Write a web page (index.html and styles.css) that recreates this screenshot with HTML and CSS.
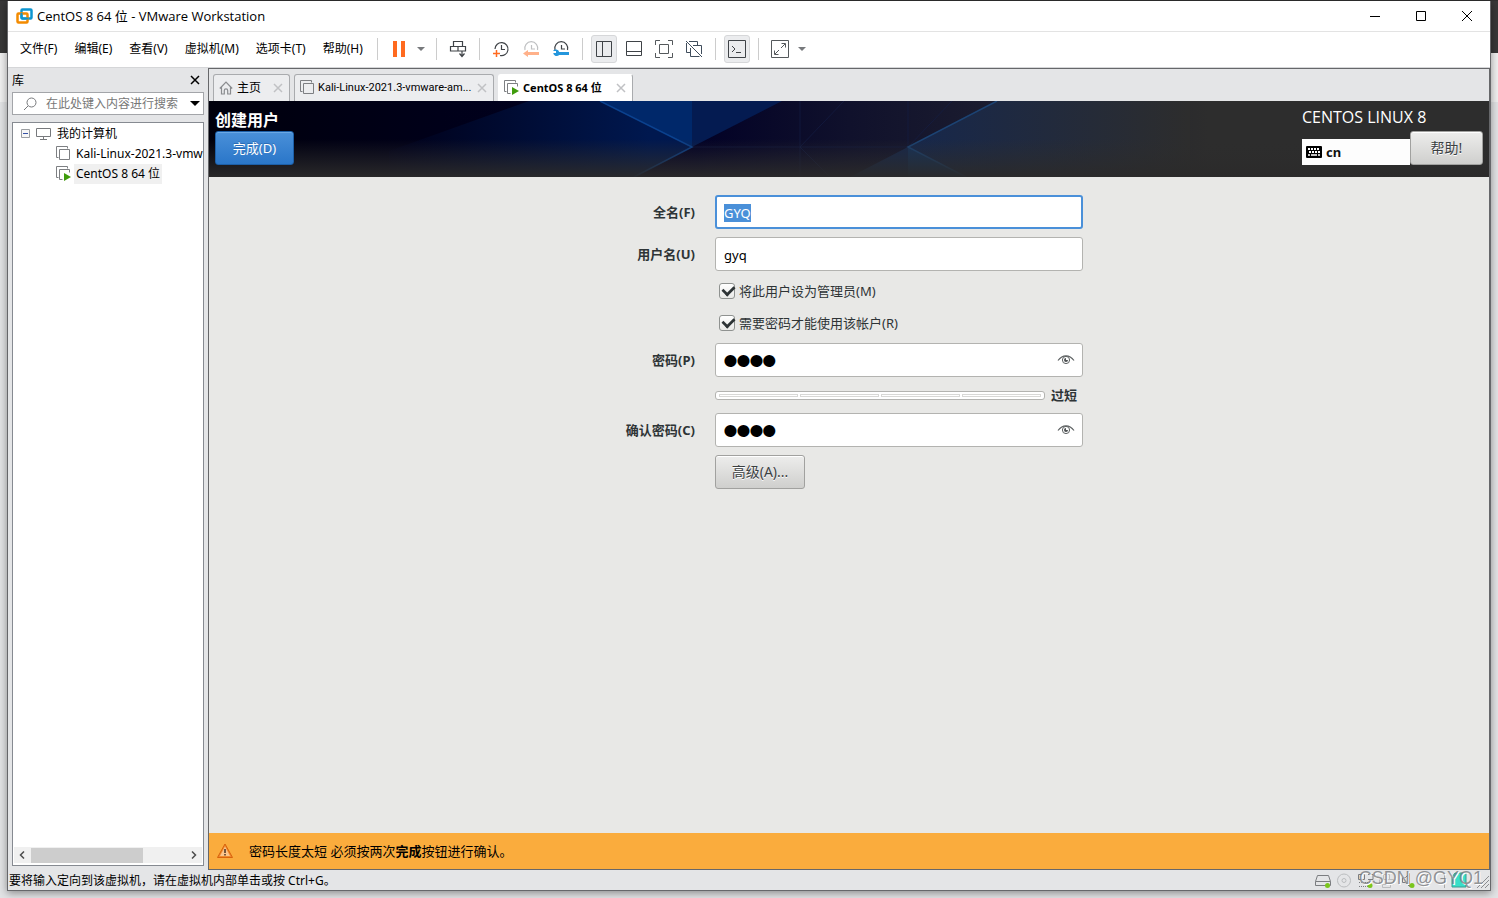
FILE: index.html
```html
<!DOCTYPE html>
<html lang="zh-CN">
<head>
<meta charset="utf-8">
<title>CentOS 8 64 位 - VMware Workstation</title>
<link rel="stylesheet" href="styles.css">
</head>
<body>
<svg class="defs" width="0" height="0" aria-hidden="true">
  <symbol id="vm" viewBox="0 0 16 16"><path d="M2.500 11.500h-2v-11h11v2M3.500 3.500h10v10h-10z" fill="none" stroke="#7d7f82"/></symbol>
  <symbol id="vm-on" viewBox="0 0 16 16"><path d="M2.500 11.500h-2v-11h11v2M6.500 13.500h-3v-10h10v3" fill="none" stroke="#7d7f82"/><path d="M8 7l7 4-7 4z" fill="#3f9c0c"/></symbol>
  <symbol id="close" viewBox="0 0 10 10"><path d="M1 1l8 8M9 1l-8 8" stroke="currentColor" stroke-width="1.500"/></symbol>
  <symbol id="eye" viewBox="0 0 18 12"><path d="M1 5.500C4 1.500 7 .8 9 .8S14 1.500 17 5.500" fill="none" stroke="#5d6162" stroke-width="1.200"/><circle cx="9" cy="5" r="3.600" fill="none" stroke="#5d6162"/><path d="M9 3v2h2a2 2 0 1 1-2-2z" fill="#4d5152"/></symbol>
</svg>
<div class="window">
  <header class="titlebar">
    <svg class="logo" width="17" height="16" viewBox="0 0 17 16" fill="none" stroke-width="2.500"><rect x="5.500" y="1.500" width="10" height="9" rx="1" stroke="#0d95d0"/><rect x="1.500" y="5.500" width="10" height="9" rx="1" stroke="#f38b00"/><path d="M5.500 5v5a1 1 0 0 0 1 .5h6" stroke="#0d95d0" stroke-width="2"/></svg>
    <h1 class="title">CentOS 8 64 位 - VMware Workstation</h1>
    <div class="caption">
      <button class="cap" aria-label="最小化"><svg width="10" height="10"><path d="M0 5.500h10" stroke="#000"/></svg></button>
      <button class="cap" aria-label="最大化"><svg width="10" height="10"><path d="M.5.5h9v9h-9z" fill="none" stroke="#000"/></svg></button>
      <button class="cap" aria-label="关闭"><svg width="10" height="10"><path d="M0 0l10 10M10 0L0 10" stroke="#000"/></svg></button>
    </div>
  </header>
  <nav class="menubar">
    <div class="menus">
      <button class="menu">文件(F)</button><button class="menu">编辑(E)</button><button class="menu">查看(V)</button><button class="menu">虚拟机(M)</button><button class="menu">选项卡(T)</button><button class="menu">帮助(H)</button>
    </div>
    <div class="tools">
      <span class="sep"></span>
      <button class="tool" aria-label="挂起"><svg width="12" height="16"><path d="M0 0h4v16H0zM8 0h4v16H8z" fill="#ff6a1f"/></svg></button>
      <button class="drop power" aria-label="电源选项"></button>
      <span class="sep"></span>
      <button class="tool" aria-label="发送按键"><svg width="18" height="18" viewBox="0 0 18 18" fill="none" stroke="#3f4347" stroke-width="1.200"><path d="M4.500 1.500h9v5h-9zM1.500 6.500h15v4.500h-15zM9 6.500V11M13 11v5M10.500 13.500L13 16.500l2.500-3"/></svg></button>
      <span class="sep"></span>
      <button class="tool" aria-label="拍摄快照"><svg width="18" height="18" viewBox="0 0 18 18" fill="none" stroke="#3f4347" stroke-width="1.200"><path d="M3 9a6.500 6.500 0 1 1 5 6.500M9.500 5v4.500H13"/><path d="M1 13.500h7M4.500 10v7" stroke="#ff6a1f" stroke-width="1.500"/></svg></button>
      <button class="tool" aria-label="恢复快照"><svg width="18" height="18" viewBox="0 0 18 18" fill="none" stroke="#bfc0c2" stroke-width="1.200"><path d="M3 10a6.500 6.500 0 1 1 12.500 0M9.500 5v4H13"/><path d="M1 13.500l5-3.500v2h11v3H6v2z" fill="#ffb18a" stroke="none"/></svg></button>
      <button class="tool" aria-label="管理快照"><svg width="18" height="18" viewBox="0 0 18 18" fill="none" stroke="#3f4347" stroke-width="1.200"><path d="M3 10a6.500 6.500 0 1 1 12.500 0M9.500 5v4H13"/><path d="M1 11h3v2H1.200a3.500 3.500 0 0 0 6 2H17v-3H7.200a3.500 3.500 0 0 0-6.200-1z" fill="#2496dc" stroke="none"/></svg></button>
      <span class="sep"></span>
      <button class="tool on" aria-label="显示库"><svg width="18" height="18"><path d="M1.500 1.500h15v15h-15zM7.500 1.500v15" fill="none" stroke="#3f4347"/></svg></button>
      <button class="tool" aria-label="缩略图栏"><svg width="18" height="18"><path d="M1.500 1.500h15v14h-15zM1.500 11.500h15" fill="none" stroke="#3f4347"/></svg></button>
      <button class="tool" aria-label="全屏"><svg width="18" height="18"><path d="M.5 5V.5H5M13 .5h4.500V5M17.500 13v4.500H13M5 17.500H.5V13M4.500 4.500h9v9h-9z" fill="none" stroke="#55595c"/></svg></button>
      <button class="tool" aria-label="Unity 模式"><svg width="18" height="18"><path d="M4 1.500h8.500V5M1.500 3v9.500H5M5.500 8v8.500h9M8 5.500h8.500V14M1 1l16 16" fill="none" stroke="#3f4d5c"/></svg></button>
      <span class="sep"></span>
      <button class="tool on" aria-label="控制台视图"><svg width="18" height="18"><path d="M.5.5h17v17H.5zM4 6l3 3-3 3M8 12.500h5" fill="none" stroke="#3f4347"/></svg></button>
      <span class="sep"></span>
      <button class="tool" aria-label="自由拉伸"><svg width="18" height="18"><path d="M.5.5h17v17H.5zM10.500 3.500h4v4M14 4l-4 4M3.500 10.500v4h4M4 14l4-4" fill="none" stroke="#55595c"/></svg></button>
      <button class="drop" aria-label="拉伸选项"></button>
    </div>
  </nav>
  <div class="body">
    <aside class="library">
      <div class="lib-head"><h2 class="lib-title">库</h2><button class="lib-close" aria-label="关闭库"><svg width="10" height="10"><use href="#close"/></svg></button></div>
      <div class="search">
        <svg width="14" height="14" fill="none" stroke="#77797c"><circle cx="8.500" cy="5.500" r="4.500"/><path d="M5 9l-4 4"/></svg>
        <input class="search-box" aria-label="搜索" placeholder="在此处键入内容进行搜索">
        <button class="drop dark" aria-label="搜索选项"></button>
      </div>
      <div class="tree">
        <ul class="nodes">
          <li class="node root"><svg width="9" height="9"><path d="M.5.5h8v8h-8z" fill="#f6f6f6" stroke="#9a9da1"/><path d="M2 4.500h5" stroke="#3551a5"/></svg><svg width="15" height="12"><path d="M.5.5h14v8H.5zM7.500 9v2.500M4 11.500h7" fill="none" stroke="#77797c"/></svg><span>我的计算机</span></li>
          <li class="node"><svg width="16" height="16"><use href="#vm"/></svg><span>Kali-Linux-2021.3-vmw</span></li>
          <li class="node"><svg width="16" height="16"><use href="#vm-on"/></svg><span class="picked">CentOS 8 64 位</span></li>
        </ul>
        <div class="scroll"><svg width="6" height="8"><path d="M5 .5L1.500 4 5 7.500" fill="none" stroke="#4c4c4c" stroke-width="1.500"/></svg><div class="track"><div class="thumb"></div></div><svg width="6" height="8"><path d="M1 .5L4.500 4 1 7.500" fill="none" stroke="#4c4c4c" stroke-width="1.500"/></svg></div>
      </div>
    </aside>
    <main class="work">
      <div class="tabs">
        <div class="tab home"><svg width="14" height="14" viewBox="0 0 14 14" fill="none" stroke="#8a8c8f" stroke-width="1.200"><path d="M.8 7.500L7 1.200l6.200 6.300M2.500 6v7h2.800V9.500a1.700 1.700 0 0 1 3.400 0V13h2.800V6"/></svg><button class="tab-name">主页</button><button class="tab-x" aria-label="关闭主页"><svg width="10" height="10"><use href="#close"/></svg></button></div>
        <div class="tab kali"><svg width="16" height="16"><use href="#vm"/></svg><button class="tab-name">Kali-Linux-2021.3-vmware-am...</button><button class="tab-x" aria-label="关闭 Kali"><svg width="10" height="10"><use href="#close"/></svg></button></div>
        <div class="tab active"><svg width="16" height="16"><use href="#vm-on"/></svg><button class="tab-name">CentOS 8 64 位</button><button class="tab-x" aria-label="关闭 CentOS"><svg width="10" height="10"><use href="#close"/></svg></button></div>
      </div>
      <section class="guest">
        <header class="banner">
          <svg class="art" width="1281" height="76" viewBox="0 0 1281 76" aria-hidden="true">
            <defs>
              <linearGradient id="base"><stop offset="0" stop-color="#00000c"/><stop offset=".18" stop-color="#000019"/><stop offset=".38" stop-color="#020126"/><stop offset=".5" stop-color="#10112c"/><stop offset=".62" stop-color="#1c1d2f"/><stop offset=".78" stop-color="#2d2d2d"/></linearGradient>
              <linearGradient id="blue" gradientUnits="userSpaceOnUse" x1="180" x2="440"><stop offset="0" stop-color="#000019"/><stop offset="1" stop-color="#00184f"/></linearGradient>
              <linearGradient id="slate" gradientUnits="userSpaceOnUse" x1="699" x2="980"><stop offset="0" stop-color="#16274c"/><stop offset="1" stop-color="#2d2d2d"/></linearGradient>
              <linearGradient id="fade" x2="0" y2="1"><stop offset=".5" stop-color="#2d2d2d" stop-opacity="0"/><stop offset="1" stop-color="#2b2a2a" stop-opacity=".95"/></linearGradient>
            </defs>
            <path d="M0 0h1281v76H0z" fill="url(#base)"/>
            <path d="M180 50L320 0h71l92 46-58 30H180z" fill="url(#blue)"/>
            <path d="M391 0h92v46z" fill="#00286a"/>
            <path d="M483 0h90l-90 46z" fill="#041b51"/>
            <path d="M788 0h193v76H641l58-30z" fill="url(#slate)"/>
            <path d="M699 46v30h58z" fill="#16325a"/>
            <path d="M483 46h216M591 0v76M699 0v46M591 46l44-46M591 46l30 30M699 46l44-46" fill="none" stroke="#152048" opacity=".6"/>
            <path d="M391 0l92 46-58 30" fill="none" stroke="#0b428f" stroke-width="1.500"/>
            <path d="M788 0l-89 46 58 30" fill="none" stroke="#1c4373" stroke-width="1.500"/>
            <path d="M0 0h1281v76H0z" fill="url(#fade)"/>
          </svg>
          <div class="spoke">
            <h2 class="spoke-title">创建用户</h2>
            <button class="btn primary">完成(D)</button>
          </div>
          <div class="distro">
            <p class="distro-name">CENTOS LINUX 8</p>
            <div class="distro-row">
              <div class="layout"><svg width="16" height="12"><rect width="16" height="12" rx="1"/><path d="M2 3h12M3 6h11" stroke="#fff" stroke-width="2" stroke-dasharray="2 1"/><path d="M2 9h2M5 9h6M12 9h2" stroke="#fff" stroke-width="1.500"/></svg><span>cn</span></div>
              <button class="btn help">帮助!</button>
            </div>
          </div>
        </header>
        <form class="form">
          <label class="label" for="full">全名(F)</label><input class="field" id="full" value="GYQ">
          <label class="label" for="user">用户名(U)</label><input class="field" id="user" value="gyq">
          <label class="check"><input class="tick" type="checkbox" checked><span>将此用户设为管理员(M)</span></label>
          <label class="check"><input class="tick" type="checkbox" checked><span>需要密码才能使用该帐户(R)</span></label>
          <label class="label" for="pw">密码(P)</label>
          <div class="field secret"><input class="dots" id="pw" type="password" value="abcd"><svg width="18" height="12"><use href="#eye"/></svg></div>
          <div class="strength"><div class="meter"><i></i><i></i><i></i><i></i></div><strong class="verdict">过短</strong></div>
          <label class="label" for="pw2">确认密码(C)</label>
          <div class="field secret"><input class="dots" id="pw2" type="password" value="abcd"><svg width="18" height="12"><use href="#eye"/></svg></div>
          <button class="btn advanced" type="button">高级(A)...</button>
        </form>
        <div class="warning">
          <svg width="16" height="16"><path d="M8 1l7.500 13.500H.5z" fill="#f08a2c" stroke="#d8620c" stroke-linejoin="round"/><path d="M8 3.500L13 13H3z" fill="#fbc58c"/><path d="M8 6v4M8 11v1.500" stroke="#4a3020" stroke-width="1.500"/></svg>
          <p>密码长度太短 必须按两次<strong>完成</strong>按钮进行确认。</p>
        </div>
      </section>
    </main>
  </div>
  <footer class="status">
    <p>要将输入定向到该虚拟机，请在虚拟机内部单击或按 Ctrl+G。</p>
    <div class="devices">
      <svg width="176" height="20" fill="none" stroke="#7b7d80">
        <path d="M4.500 4.500h11l2 6v4h-15v-4zM2.500 10.500h15"/><circle cx="14.500" cy="14.500" r="2.500" fill="#7ac51d" stroke="none"/>
        <g stroke="#bbbdbf"><circle cx="31" cy="9.500" r="6.500"/><circle cx="31" cy="9.500" r="2"/></g>
        <path d="M45.500 3.500h6v5h-6zM55 3.500h5v5h-5" /><path d="M46 11.500h12M46 15.500h9" stroke-dasharray="1 1"/><circle cx="57" cy="14.500" r="2.500" fill="#7ac51d" stroke="none"/>
        <path d="M70.500 3.500h6v5h-6zM66.500 8.500h14v5h-14zM69.500 13.500h8v3h-8z" stroke="#bbbdbf"/>
        <path d="M89.500 6.500h3l4-4v13l-4-4h-3z"/><circle cx="99" cy="14.500" r="2.500" fill="#7ac51d" stroke="none"/>
        <path d="M131.500 4v13" stroke="#aaa"/>
        <path d="M139 16V6l3-4h11v14z" fill="#38dfc9" stroke="#3b9c90"/>
        <path d="M164 17l12-12M168 17l8-8M172 17l4-4" stroke="#8b8d90"/>
      </svg>
      <span class="mark">CSDN @GYQ1</span>
    </div>
  </footer>
</div>
<script src="main.js"></script>
</body>
</html>
```
FILE: styles.css
```css
* { box-sizing: border-box; margin: 0; }
html, body { height: 100%; }
body {
  display: flex;
  padding: 1px 7px 7px;
  overflow: hidden;
  font: 12px/16px "Noto Sans", "Noto Sans CJK SC", sans-serif;
  color: #000;
  background: linear-gradient(#303030 0 1px, #383838 1px 53px, #f0f0f0 53px 102px, #e2e3e5 102px);
}
button, input { font: inherit; color: inherit; border: 0; padding: 0; background: none; }
button, label { white-space: nowrap; }
svg { display: block; flex: none; }
.defs { position: absolute; }

.window {
  flex: 1;
  min-width: 0;
  display: flex;
  flex-direction: column;
  background: #e4e5e7;
  border: 1px solid #66676a;
  border-top: 0;
  box-shadow: 0 2px 8px rgba(0, 0, 0, .4);
}
.titlebar { display: flex; align-items: center; height: 31px; background: #fff; border-bottom: 1px solid #e3e3e3; }
.logo { margin: 0 4px 0 8px; }
.title { flex: 1; font: 13px/16px "Open Sans", "Noto Sans CJK SC", sans-serif; }
.caption { display: flex; }
.cap { width: 46px; height: 28px; display: grid; place-items: center; }

.menubar { display: flex; align-items: center; height: 36px; padding-bottom: 2px; background: #fff; border-bottom: 1px solid #d5d6d8; }
.menus { display: flex; gap: 17px; padding-left: 12px; margin-right: 10px; }
.menu { line-height: 20px; }
.tools { display: flex; align-items: center; gap: 4px; }
.sep { width: 1px; height: 22px; background: #ccc; margin: 0 4px; }
.tool { width: 26px; height: 28px; display: grid; place-items: center; border: 1px solid transparent; border-radius: 3px; }
.tool.on { background: #ebecee; border-color: #d6d7d9; }
.drop { width: 10px; height: 20px; display: grid; place-items: center; color: #77797c; }
.drop::before { content: ""; border: 4px solid transparent; border-top-color: currentColor; border-bottom: 0; }
.drop.power { margin-right: 2px; }
.drop.dark { color: #000; }
.drop.dark::before { border-width: 5px 5px 0; }

.body { flex: 1; min-height: 0; display: flex; }
.library { width: 200px; flex: none; display: flex; flex-direction: column; padding: 0 4px 4px; }
.lib-head { display: flex; align-items: center; justify-content: space-between; height: 24px; padding-right: 4px; }
.lib-title { font: 12px/16px "Noto Sans CJK SC", sans-serif; }
.search { display: flex; align-items: center; height: 23px; padding: 0 3px 0 10px; background: #fff; border: 1px solid #a3a5a9; margin: 0 0 7px; }
.search-box { flex: 1; min-width: 0; margin-left: 9px; outline: 0; }
.search-box::placeholder { color: #777; opacity: 1; }
.tree { flex: 1; display: flex; flex-direction: column; justify-content: space-between; background: #fff; border: 1px solid #868a91; padding: 0 1px 2px; overflow: hidden; }
.nodes { list-style: none; padding: 0; }
.node { display: flex; align-items: center; gap: 4px; height: 20px; padding-left: 42px; white-space: nowrap; }
.node.root { gap: 6px; padding-left: 7px; height: 21px; }
.picked { background: #f0f0f0; padding: 2px; margin-left: -2px; }
.scroll { display: flex; align-items: center; gap: 6px; height: 16px; padding: 0 5px; background: #f0f0f0; }
.track { flex: 1; }
.thumb { width: 73%; height: 15px; background: #cdcdcd; }

.work { flex: 1; min-width: 0; display: flex; flex-direction: column; border: 1px solid #66676a; }
.tabs { display: flex; gap: 4px; height: 32px; padding: 5px 4px 0; }
.tab { display: flex; align-items: center; height: 27px; padding: 0 6px 0 5px; background: #ecedef; border: 1px solid #a9abae; border-bottom: 0; border-radius: 3px 3px 0 0; }
.tab-name { flex: 1; text-align: left; padding: 0 3px; }
.tab-x { color: #c0c1c4; }
.home { width: 77px; }
.home .tab-name { padding-left: 4px; }
.kali { width: 200px; }
.kali .tab-name { font: 11px/16px Roboto, sans-serif; padding: 0 2px; }
.active { width: 135px; background: #fff; border-color: #fff #a9abae #fff #fff; }
.active .tab-name { font: bold 11px/16px "Noto Sans", "Noto Sans CJK SC", sans-serif; }

.guest { flex: 1; min-height: 0; display: flex; flex-direction: column; background: #e8e8e6; font: 13px/20px "Noto Sans", "Noto Sans CJK SC", sans-serif; color: #2e3436; }
.banner { position: relative; display: flex; justify-content: space-between; height: 76px; background: #2d2d2d; color: #fff; overflow: hidden; }
.art { position: absolute; left: 0; top: 0; }
.spoke, .distro { position: relative; }
.spoke { padding: 8px 6px; }
.spoke-title { font-size: 16px; line-height: 22px; }
.btn { height: 34px; border: 1px solid #a1a19f; border-radius: 3px; background: linear-gradient(#ededec, #cfcfcd); box-shadow: inset 0 1px #fff; color: #3b4042; text-shadow: 0 1px #fff; }
.btn.primary { width: 79px; border-color: #1c5fa8; background: linear-gradient(#4a90d9, #2a76c9); box-shadow: inset 0 1px #6ba8e5; color: #fff; text-shadow: 0 -1px #2a6cb5; }
.distro { padding: 5px 6px 0 0; }
.distro-name { font: 16px/22px "Open Sans", sans-serif; }
.distro-row { display: flex; align-items: flex-end; margin-top: 3px; }
.layout { display: flex; align-items: center; gap: 4px; width: 108px; height: 26px; padding-left: 4px; background: #fdfdfd; color: #111; font-weight: bold; }
.help { width: 73px; }
.help, .advanced { font-size: 14px; }

.form { flex: 1; display: grid; grid-template-columns: 72px 368px; gap: 8px 20px; align-content: start; justify-content: center; padding: 18px 0 0 8px; }
.label { justify-self: end; align-self: center; font-weight: bold; }
.field { width: 100%; height: 34px; padding: 2px 8px 0; background: #fff; border: 1px solid #b3b3b0; border-radius: 3px; color: #000; outline: 0; }
.field:focus { border: 2px solid #4a90d9; padding: 2px 7px 0; }
.field::selection { background: #4a90d9; color: #fff; }
.check, .strength, .advanced { grid-column: 2; }
.check { display: flex; align-items: center; gap: 4px; height: 24px; padding: 0 4px; }
.tick { appearance: none; width: 16px; height: 16px; border: 1px solid #8f9290; border-radius: 3px; background: linear-gradient(#fff, #e9e9e7); display: grid; place-items: center; }
.tick:checked::before { content: ""; width: 10px; height: 6px; border: solid #2e3436; border-width: 0 0 3px 3px; transform: translate(1px, -2px) rotate(-45deg) scale(.9); }
.secret { display: flex; align-items: center; padding: 2px 7px 0 8px; }
.dots { flex: 1; min-width: 0; height: 30px; outline: 0; font: 37px/30px "Liberation Sans", sans-serif; -webkit-text-stroke: 2px #000; }
.strength { display: flex; align-items: center; gap: 6px; height: 20px; }
.meter { width: 330px; height: 9px; display: flex; gap: 2px; padding: 2px 3px; background: #fff; border: 1px solid #b3b3b0; border-radius: 3px; }
.meter i { flex: 1; border: 1px solid #d8d8d6; }
.advanced { width: 90px; }
.warning { display: flex; align-items: center; gap: 16px; height: 36px; padding: 0 8px; background: #faac3d; color: #000; }

.status { display: flex; align-items: center; justify-content: space-between; height: 20px; padding: 2px 1px 0; }
.devices { position: relative; }
.mark { position: absolute; right: 6px; top: -3px; font: 18px/20px "Liberation Sans", sans-serif; color: rgba(120, 122, 125, .8); text-shadow: 1px 1px #fff; white-space: nowrap; }
```
FILE: main.js
```js
const fullName = document.getElementById("full");
fullName.focus();
fullName.select();
```
